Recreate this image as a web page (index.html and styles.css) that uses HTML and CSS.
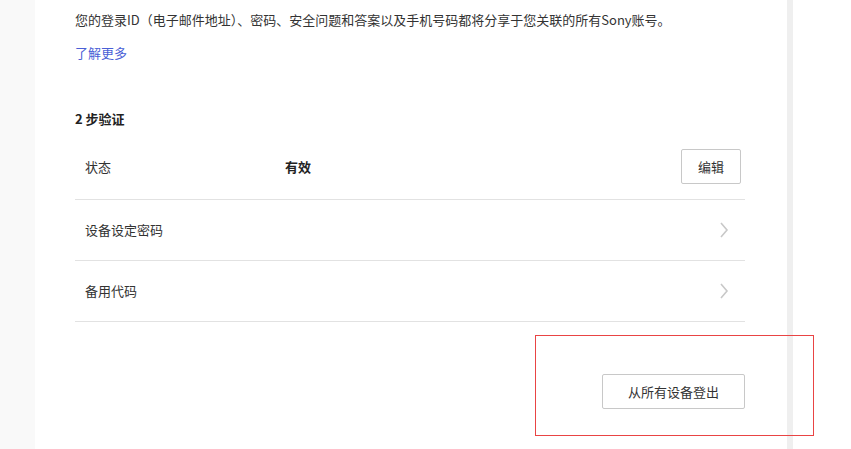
FILE: index.html
```html
<!DOCTYPE html>
<html lang="zh-CN">
<head>
  <meta charset="UTF-8">
  <meta name="viewport" content="width=device-width, initial-scale=1.0">
  <title>2 步验证</title>
  <link rel="stylesheet" href="styles.css">
</head>
<body>
  <div class="side"></div>

  <main class="content">
    <p class="intro">您的登录ID（电子邮件地址）、密码、安全问题和答案以及手机号码都将分享于您关联的所有Sony账号。</p>
    <a class="more" href="#">了解更多</a>

    <h2 class="section-title">2 步验证</h2>

    <div class="list">
      <div class="row row-status">
        <span class="label">状态</span>
        <span class="value">有效</span>
        <button class="btn btn-edit">编辑</button>
      </div>
      <div class="row row-link">
        <span class="label">设备设定密码</span>
        <svg class="chevron" width="10" height="18" viewBox="0 0 10 18">
          <path d="M2 2 L8 9 L2 16" fill="none" stroke="#c8c8c8" stroke-width="1.6"/>
        </svg>
      </div>
      <div class="row row-link">
        <span class="label">备用代码</span>
        <svg class="chevron" width="10" height="18" viewBox="0 0 10 18">
          <path d="M2 2 L8 9 L2 16" fill="none" stroke="#c8c8c8" stroke-width="1.6"/>
        </svg>
      </div>
    </div>

    <div class="logout">
      <button class="btn btn-logout">从所有设备登出</button>
    </div>
  </main>

  <div class="scroll-bar"></div>

  <!-- 标注框 -->
  <div class="highlight"></div>
</body>
</html>
```

FILE: styles.css
```css
body {
  margin: 0;
  display: flex;
  min-height: 449px;
  background-color: #fff;
  color: #333;
  font-family: "Noto Sans CJK SC", "Liberation Sans", sans-serif;
  font-size: 13px;
  line-height: 20px;
}
.side {
  width: 35px;
  flex-shrink: 0;
  background-color: #f9f9f9;
}
.content {
  width: 670px;
  flex-shrink: 0;
  padding: 10px 42px 0 40px;
  background-color: #fff;
}
.scroll-bar {
  width: 6px;
  flex-shrink: 0;
  background-color: #efefef;
}
.intro {
  margin: 0 0 13px;
}
.more {
  display: block;
  color: #4a5fd6;
  text-decoration: none;
}
.section-title {
  margin: 46px 0 10px;
  font-size: 13px;
  line-height: 20px;
  font-weight: bold;
  color: #222;
}
.row {
  display: flex;
  align-items: center;
  border-bottom: 1px solid #e2e2e2;
  padding-left: 10px;
}
.row-status {
  padding: 10px 4px 15px 10px;
}
.row-link {
  height: 60px;
  padding-right: 16px;
  justify-content: space-between;
}
.label {
  width: 200px;
}
.value {
  flex: 1;
  font-weight: bold;
  color: #222;
}
.btn {
  height: 35px;
  border: 1px solid #c8c8c8;
  border-radius: 2px;
  background-color: #fff;
  color: #333;
  font-family: inherit;
  font-size: 13px;
  padding: 0;
}
.btn-edit {
  width: 60px;
}
.btn-logout {
  width: 143px;
}
.logout {
  display: flex;
  justify-content: flex-end;
  margin-top: 52px;
}
.highlight {
  position: absolute;
  left: 535px;
  top: 335px;
  width: 277px;
  height: 99px;
  border: 1px solid #e94444;
}
```
